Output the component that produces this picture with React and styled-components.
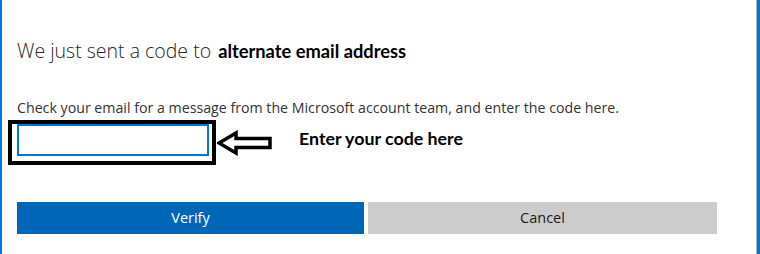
import React from 'react';
import styled, { createGlobalStyle } from 'styled-components';

const GlobalStyle = createGlobalStyle`
  html, body {
    margin: 0;
    padding: 0;
    background: #ffffff;
  }
`;

const ArrowIcon = () => (
  <svg width="56" height="26" viewBox="0 0 56 26">
    <path
      d="M2 13 L19 3 L19 8.5 L53 8.5 L53 17.5 L19 17.5 L19 23 Z"
      fill="#ffffff"
      stroke="#000000"
      strokeWidth="3.5"
      strokeLinejoin="miter"
    />
  </svg>
);

export default function App() {
  return (
    <>
      <GlobalStyle />
      <StyledPanel>
        <StyledInner>
          <StyledHeading>
            We just sent a code to <StyledStrong>alternate email address</StyledStrong>
          </StyledHeading>
          <StyledText>
            Check your email for a message from the Microsoft account team, and enter the code here.
          </StyledText>
          <StyledInputRow>
            <StyledFrame>
              <StyledInput type="text" />
            </StyledFrame>
            <StyledArrow>
              <ArrowIcon />
            </StyledArrow>
            <StyledHint>Enter your code here</StyledHint>
          </StyledInputRow>
          <StyledButtons>
            <StyledButton primary>Verify</StyledButton>
            <StyledButton>Cancel</StyledButton>
          </StyledButtons>
        </StyledInner>
      </StyledPanel>
    </>
  );
}

const StyledPanel = styled.div`
  width: 760px;
  height: 254px;
  box-sizing: border-box;
  border-left: 2px solid #0078d7;
  border-right: 3px solid #0078d7;
  background: #ffffff;
  overflow: hidden;
`;

const StyledInner = styled.div`
  height: 100%;
  box-sizing: border-box;
  border-right: 1px solid #b5b5b5;
  padding: 37px 0 0 15px;
`;

const StyledHeading = styled.h1`
  margin: 0;
  font-family: 'Open Sans', 'Segoe UI', sans-serif;
  font-weight: 300;
  font-size: 19.5px;
  line-height: 28px;
  color: #262626;
  white-space: nowrap;
`;

const StyledStrong = styled.span`
  font-family: Lato, 'Open Sans', sans-serif;
  font-weight: 700;
  font-size: 18.3px;
  color: #000000;
  margin-left: 2px;
`;

const StyledText = styled.p`
  margin: 33px 0 0;
  font-family: 'Open Sans', 'Segoe UI', sans-serif;
  font-size: 14.2px;
  line-height: 20px;
  color: #333333;
  white-space: nowrap;
`;

const StyledInputRow = styled.div`
  display: flex;
  align-items: center;
  margin: 2px 0 0 -9px;
`;

const StyledFrame = styled.div`
  border: 4.5px solid #000000;
  border-top-width: 4px;
  padding: 0 3.5px 4.5px 4.5px;
  background: #ffffff;
`;

const StyledInput = styled.input`
  display: block;
  box-sizing: border-box;
  width: 192px;
  height: 32px;
  margin: 0;
  border: 2px solid #0078d7;
  outline: none;
  background: #ffffff;
  padding: 0 8px;
`;

const StyledArrow = styled.div`
  display: flex;
  margin: 2px 0 0 1px;
`;

const StyledHint = styled.span`
  margin: -8px 0 0 26px;
  font-family: Lato, 'Open Sans', sans-serif;
  font-weight: 700;
  font-size: 17.8px;
  color: #000000;
`;

const StyledButtons = styled.div`
  display: flex;
  gap: 4px;
  margin-top: 37px;
`;

const StyledButton = styled.button`
  width: ${({ primary }) => (primary ? '347px' : '349px')};
  height: 32px;
  margin: 0;
  border: none;
  padding: 0;
  background: ${({ primary }) => (primary ? '#0067b8' : '#cccccc')};
  color: ${({ primary }) => (primary ? '#ffffff' : '#1a1a1a')};
  font-family: 'Open Sans', 'Segoe UI', sans-serif;
  font-size: 14.5px;
  cursor: pointer;
`;
